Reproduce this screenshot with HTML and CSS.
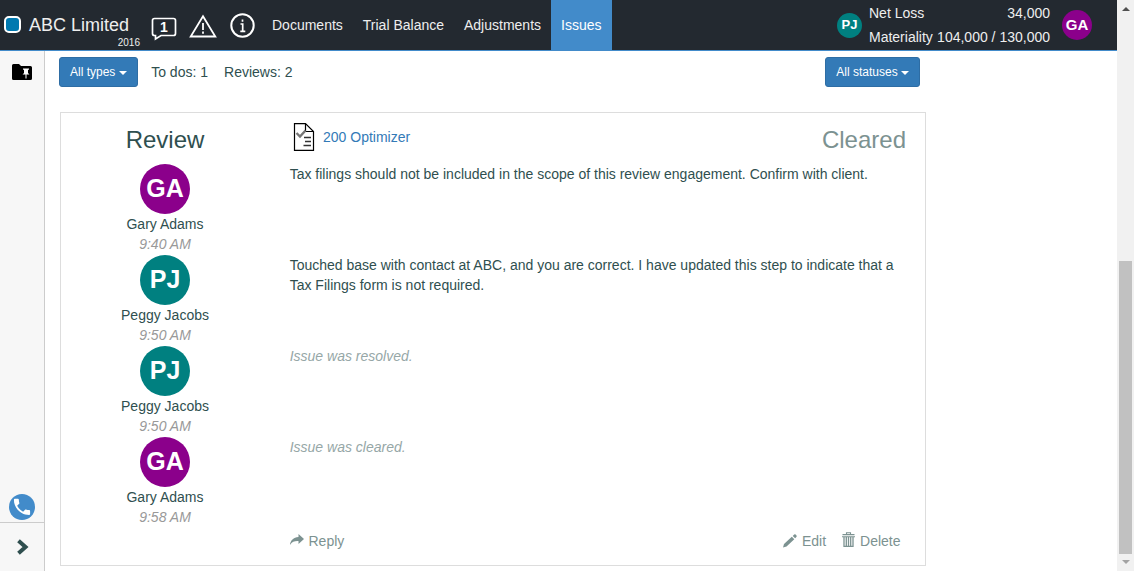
FILE: index.html
```html
<!DOCTYPE html>
<html lang="en">
<head>
<meta charset="utf-8">
<title>Issues</title>
<link rel="stylesheet" href="styles.css">
</head>
<body>
<div class="window">
  <div class="page">
    <header class="topbar">
      <span class="logo"></span>
      <div class="client"><span class="client-name">ABC Limited</span><span class="client-year">2016</span></div>
      <div class="alerts">
        <svg class="ic-chat" width="26" height="25" viewBox="0 0 26 25"><path d="M3.500 1.500H22.500Q24.500 1.500 24.500 3.500V16.500Q24.500 18.500 22.500 18.500H10L4.500 22V18.500H3.500Q1.500 18.500 1.500 16.500V3.500Q1.500 1.500 3.500 1.500Z" fill="none" stroke="#fff" stroke-width="1.700"/><text x="13" y="15" text-anchor="middle" class="chat-count">1</text></svg>
        <svg class="ic-warn" width="30" height="26" viewBox="0 0 30 26"><path d="M15 3.200L27.300 23.500H2.700Z" fill="none" stroke="#fff" stroke-width="1.800"/><path d="M15 10V17M15 18.500V20.700" stroke="#fff" stroke-width="1.800"/></svg>
        <svg class="ic-info" width="26" height="26" viewBox="0 0 26 26"><circle cx="12.500" cy="12.500" r="11.200" fill="none" stroke="#fff" stroke-width="2"/><path d="M12.500 6.500V8.800M10.500 11H12.700V18M10.300 18.300H15.300" fill="none" stroke="#fff" stroke-width="1.700"/></svg>
      </div>
      <nav class="menu"><a>Documents</a><a>Trial Balance</a><a>Adjustments</a><a class="active">Issues</a></nav>
      <div class="summary">
        <span class="avatar small teal">PJ</span>
        <div class="figures">
          <div><span>Net Loss</span><span>34,000</span></div>
          <div><span>Materiality</span><span>104,000 / 130,000</span></div>
        </div>
        <span class="avatar medium purple">GA</span>
      </div>
    </header>
    <div class="body">
      <aside class="rail">
        <svg class="ic-folder" width="20" height="16" viewBox="0 0 20 16"><path d="M1.500 0H7L9 2H18.500Q20 2 20 3.500V14.500Q20 16 18.500 16H1.500Q0 16 0 14.500V1.500Q0 0 1.500 0Z" fill="#000"/><path d="M11 4.500H17V5.500L16 6V9L17.500 10.500H14.500V14L14 15L13.500 14V10.500H10.500L12 9V6L11 5.500Z" fill="#fff"/></svg>
        <div class="rail-bottom">
          <svg class="ic-phone" width="26" height="26" viewBox="0 0 26 26"><circle cx="13" cy="13" r="13" fill="#428bca"/><path transform="translate(2.200 2.100) scale(.9)" d="M6.620 10.790c1.440 2.830 3.760 5.140 6.590 6.590l2.200-2.200c.27-.27.67-.36 1.020-.24 1.120.37 2.330.57 3.570.57.55 0 1 .45 1 1V20c0 .55-.45 1-1 1C10.610 21 3 13.390 3 4c0-.55.45-1 1-1h3.500c.55 0 1 .45 1 1 0 1.250.2 2.450.57 3.570.11.35.03.74-.25 1.020z" fill="#fff"/></svg>
          <div class="expand"><svg width="12" height="16" viewBox="0 0 12 16"><path d="M1.500 1.800L8.500 8L1.500 14.200" fill="none" stroke="#2f4f4f" stroke-width="4"/></svg></div>
        </div>
      </aside>
      <main class="content">
        <div class="filters">
          <button class="btn">All types <i class="caret"></i></button>
          <span class="todos">To dos: 1</span><span>Reviews: 2</span>
          <button class="btn statuses">All statuses <i class="caret"></i></button>
        </div>
        <section class="card">
          <div class="row head">
            <h3>Review</h3>
            <div class="doc"><svg width="22" height="28" viewBox="0 0 22 28"><path d="M1.500 .6H12.500L20.500 8.500V27.300H1.500Z" fill="#fff" stroke="#000" stroke-width="1.200"/><path d="M12.500 1V8.500H20.500" fill="none" stroke="#000" stroke-width="1.200"/><path d="M3.500 10L7 13.500L12.500 7.500" fill="none" stroke="#777" stroke-width="2.400"/><path d="M11 14.500H18M12 18.500H18M10.500 22.500H18" stroke="#333" stroke-width="1.300"/></svg><a>200 Optimizer</a></div>
            <h3 class="cleared">Cleared</h3>
          </div>
          <div class="row entry"><div class="author"><span class="avatar large purple">GA</span><span>Gary Adams</span><em>9:40 AM</em></div><p>Tax filings should not be included in the scope of this review engagement. Confirm with client.</p></div>
          <div class="row entry"><div class="author"><span class="avatar large teal">PJ</span><span>Peggy Jacobs</span><em>9:50 AM</em></div><p>Touched base with contact at ABC, and you are correct. I have updated this step to indicate that a Tax Filings form is not required.</p></div>
          <div class="row entry"><div class="author"><span class="avatar large teal">PJ</span><span>Peggy Jacobs</span><em>9:50 AM</em></div><p class="event">Issue was resolved.</p></div>
          <div class="row entry"><div class="author"><span class="avatar large purple">GA</span><span>Gary Adams</span><em>9:58 AM</em></div><p class="event">Issue was cleared.</p></div>
          <div class="actions">
            <a><svg class="reply" width="14" height="12" viewBox="0 0 14 12"><path d="M8.500 0L14 5L8.500 10V7C5 6.800 2 7.500 0 11C.3 6.500 3.500 3.200 8.500 3Z" fill="#7c9291"/></svg>Reply</a>
            <a class="edit"><svg width="14" height="14" viewBox="0 0 14 14"><path d="M0 13.500L1 10L8.800 2.700L11.300 5.200L3.500 12.500ZM9.700 1.900L11.200 .5Q12 0 12.600 .5L13.500 1.400Q14 2 13.500 2.800L12.200 4.300Z" fill="#7c9291"/></svg>Edit</a>
            <a><svg class="trash" width="13" height="15" viewBox="0 0 13 15"><path d="M4.500 2V.7H8.500V2M.5 2.600H12.500M0 4.700H13" fill="none" stroke="#7c9291" stroke-width="1.100"/><path d="M2 5V14.300H11V5M4.300 5V14M6.500 5V14M8.700 5V14" fill="none" stroke="#7c9291" stroke-width="1.300"/></svg>Delete</a>
          </div>
        </section>
      </main>
    </div>
  </div>
  <div class="scrollbar"><i class="up"></i><div class="thumb"></div><i class="down"></i></div>
</div>
</body>
</html>
```
FILE: styles.css
```css
* { box-sizing: border-box; }
body { margin: 0; font: 14px/20px "Liberation Sans", Arial, sans-serif; color: #2f4f4f; background: #fff; }
svg { display: block; flex: none; }
.window { display: flex; width: 1134px; height: 571px; overflow: hidden; }
.page { width: 1117px; display: flex; flex-direction: column; }
.topbar { height: 51px; flex: none; display: flex; background: #232930; border-bottom: 1px solid #428bca; color: #eee; }
.logo { width: 17px; height: 17px; margin: 16px 0 0 4px; background: #0079b0; border: 2px solid #fff; border-radius: 5px; flex: none; }
.client { width: 111px; margin: 15px 0 0 8px; display: flex; flex-direction: column; }
.client-name { font-size: 18px; }
.client-year { font-size: 10px; line-height: 15px; align-self: flex-end; }
.alerts { display: flex; width: 122px; padding-left: 11px; }
.ic-chat { margin-top: 17px; }
.ic-warn { margin: 13px 0 0 11px; }
.ic-info { margin: 13px 0 0 12px; }
.chat-count { font: bold 14px "Liberation Sans", sans-serif; fill: #fff; }
.menu { display: flex; line-height: 50px; }
.menu a { padding: 0 10px; white-space: nowrap; }
.menu .active { background: #428bca; color: #fff; height: 50px; }
.summary { display: flex; margin-left: auto; align-items: center; padding-right: 25px; }
.figures { width: 181px; margin: 0 12px 0 7px; line-height: 24px; }
.figures div { display: flex; justify-content: space-between; }
.avatar { display: block; border-radius: 50%; color: #fff; font-weight: bold; text-align: center; }
.teal { background: #008080; }
.purple { background: #8b008b; }
.small { width: 25px; height: 25px; line-height: 24px; font-size: 13px; }
.medium { width: 30px; height: 30px; line-height: 30px; font-size: 15px; }
.large { width: 50px; height: 50px; line-height: 49px; font-size: 25px; }
.body { display: flex; flex: 1; min-height: 0; }
.rail { width: 45px; background: #f7f7f7; border-right: 1px solid #ccc; display: flex; flex-direction: column; justify-content: space-between; }
.ic-folder { margin: 13px 0 0 12px; }
.ic-phone { margin: 0 0 2px 9px; }
.expand { height: 49px; border-top: 1px solid #ccc; padding: 16px 0 0 17px; }
.content { width: 882px; padding: 6px 0 0 14px; }
.filters { display: flex; align-items: center; height: 30px; width: 861px; }
.btn { height: 30px; padding: 0 10px; border: 1px solid #2e6da4; border-radius: 3px; background: #337ab7; color: #fff; font: 12px/18px "Liberation Sans", Arial, sans-serif; white-space: nowrap; }
.caret { display: inline-block; vertical-align: middle; border-top: 4px solid; border-left: 4px solid transparent; border-right: 4px solid transparent; }
.todos { margin: 0 16px 0 13.5px; }
.statuses { margin-left: auto; }
.card { width: 866px; height: 454px; margin: 25px 0 0 1px; border: 1px solid #ddd; }
.row { display: grid; grid-template-columns: 208px 1fr; }
.head { grid-template-columns: 208px 1fr auto; height: 51px; padding: 10px 19px 0 0; }
h3 { margin: 0; font-size: 24px; font-weight: normal; line-height: 34px; text-align: center; }
.cleared { color: #7c9291; }
.doc { display: flex; padding-left: 24px; gap: 8px; }
.doc a { color: #337ab7; line-height: 29px; }
.entry { height: 91px; }
.author { display: flex; flex-direction: column; align-items: center; }
.author em { color: #999; }
.entry p { margin: 0; width: 626px; padding-left: 20.7px; }
.entry .event { font-style: italic; color: #96a7a7; }
.actions { display: flex; color: #7c9291; padding: 3px 24.500px 0 228.500px; }
.actions a { display: flex; align-items: center; gap: 5px; }
.actions .edit { margin: 0 16px 0 auto; }
.reply { margin-top: -3px; }
.trash { margin-top: -3px; }
.scrollbar { width: 17px; background: #f1f1f1; display: flex; flex-direction: column; align-items: center; }
.up, .down { border: 4px solid transparent; border-top: 0; border-bottom-color: #505050; margin-top: 7px; }
.thumb { width: 13px; height: 293px; background: #c1c1c1; margin-top: 250px; }
.down { border-top: 4px solid #a3a3a3; border-bottom: 0; margin-top: 6px; }
```
